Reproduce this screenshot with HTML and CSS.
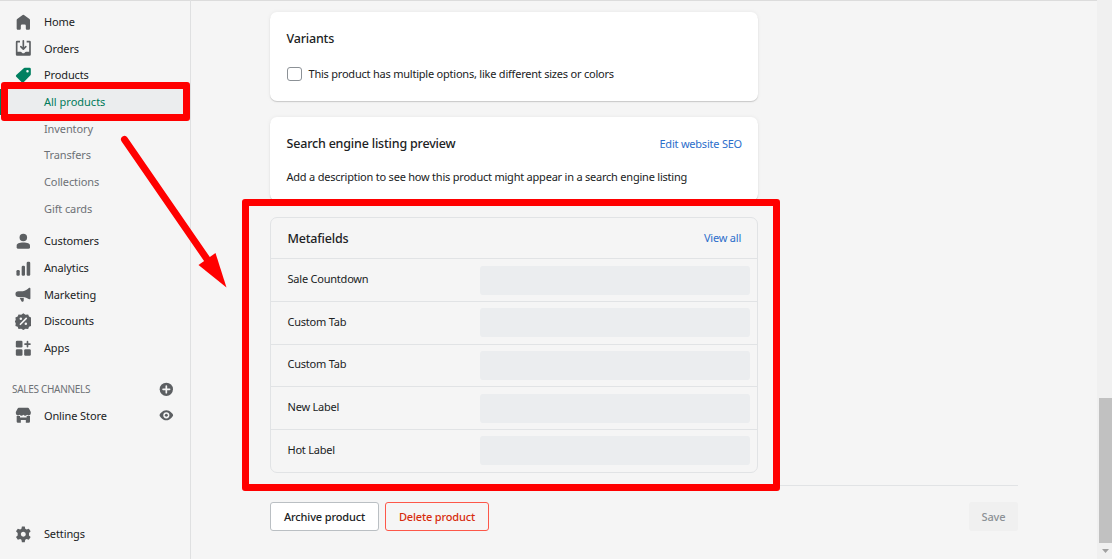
FILE: index.html
```
<!DOCTYPE html>
<html lang="en">
<head>
<meta charset="utf-8">
<title>Product settings</title>
<link rel="stylesheet" href="styles.css">
</head>
<body>
<div class="app">
  <nav class="sidebar">
    <div class="nav-group">
      <a class="nav-item"><svg class="icon" viewBox="0 0 20 20"><path d="M18 7.261V17.500c0 .841-.672 1.500-1.500 1.500h-2c-.828 0-1.500-.659-1.500-1.500V14a1.500 1.500 0 00-1.500-1.500h-3A1.500 1.500 0 007 14v3.477C7 18.318 6.328 19 5.500 19h-2c-.828 0-1.500-.682-1.500-1.523V7.261a1.500 1.500 0 01.615-1.210l6.590-4.820a1.481 1.481 0 011.590 0l6.590 4.820A1.500 1.500 0 0118 7.260z"/></svg><span>Home</span></a>
      <a class="nav-item"><svg class="icon" viewBox="0 0 20 20"><path d="M11 1a1 1 0 10-2 0v7.586L7.707 7.293a1 1 0 00-1.414 1.414l3 3a1 1 0 001.414 0l3-3a1 1 0 00-1.414-1.414L11 8.586V1z"/><path d="M3 14V3h3V1H2.500A1.500 1.500 0 001 2.500v15A1.500 1.500 0 002.500 19h15a1.500 1.500 0 001.500-1.500v-15A1.500 1.500 0 0017.500 1H14v2h3v11h-3.500c-.775 0-1.388.662-1.926 1.244A2 2 0 0110 16a2 2 0 01-1.574-.757C7.888 14.664 7.275 14 6.500 14H3z"/></svg><span>Orders</span></a>
      <a class="nav-item"><svg class="icon green" viewBox="0 0 20 20"><path fill-rule="evenodd" d="M10.500 1.500A1.600 1.600 0 0111.600 1H17.500A1.500 1.500 0 0119 2.500v6.200a1.500 1.500 0 01-.440 1.060l-8.200 8.600a1.600 1.600 0 01-2.260 0L1.500 11.800a1.500 1.500 0 010-2.120zM15 6.500a1.500 1.500 0 100-3 1.500 1.500 0 000 3z"/></svg><span>Products</span></a>
      <a class="nav-item sub selected"><span>All products</span></a>
      <a class="nav-item sub"><span>Inventory</span></a>
      <a class="nav-item sub"><span>Transfers</span></a>
      <a class="nav-item sub"><span>Collections</span></a>
      <a class="nav-item sub"><span>Gift cards</span></a>
    </div>
    <div class="nav-group">
      <a class="nav-item"><svg class="icon" viewBox="0 0 20 20"><circle cx="10" cy="5.500" r="4.500"/><path d="M2 15.200C2 12.600 5 11.500 10 11.500s8 1.100 8 3.700V17a2 2 0 01-2 2H4a2 2 0 01-2-2z"/></svg><span>Customers</span></a>
      <a class="nav-item"><svg class="icon" viewBox="0 0 20 20"><rect x="1.700" y="12" width="4" height="7" rx="1.500"/><rect x="8" y="7" width="4" height="12" rx="1.500"/><rect x="14" y="2" width="4.300" height="17" rx="1.500"/></svg><span>Analytics</span></a>
      <a class="nav-item"><svg class="icon" viewBox="0 0 20 20"><path d="M17 2.200c.7-.4 1.500 0 1.500.8v12c0 .8-.8 1.200-1.500.8-2.300-1.400-4.700-2.400-7.500-2.700H4a3 3 0 010-6.900h5.500c2.800-.3 5.200-2 7.500-4z"/><path d="M5.500 14.200h5v3.300a1.500 1.500 0 01-2.700.9z"/></svg><span>Marketing</span></a>
      <a class="nav-item"><svg class="icon" viewBox="0 0 20 20"><path d="M10 .2l2.500 1.900 3.300-.4 1 2.600 2.700 1.200-.4 3L20.300 10l-1.200 2.500.4 3-2.700 1.100-1 2.700-3.300-.4L10 20.500l-2.500-1.600-3.300.4-1-2.700-2.700-1.100.4-3L-.3 10l1.200-1.500-.4-3 2.700-1.200 1-2.600 3.300.4z"/><path class="cut-line" d="M6.500 13.500l7-7"/><circle class="cut" cx="7" cy="7" r="1.500"/><circle class="cut" cx="13" cy="13" r="1.500"/></svg><span>Discounts</span></a>
      <a class="nav-item"><svg class="icon" viewBox="0 0 20 20"><rect x="1" y="1" width="8" height="8" rx="1.500"/><rect x="1" y="11" width="8" height="8" rx="1.500"/><rect x="11" y="11" width="8" height="8" rx="1.500"/><path d="M14 2a1 1 0 012 0v2h2a1 1 0 010 2h-2v2a1 1 0 01-2 0V6h-2a1 1 0 010-2h2z"/></svg><span>Apps</span></a>
    </div>
    <div class="channel-head"><span>SALES CHANNELS</span><svg class="icon" viewBox="0 0 20 20"><circle cx="10" cy="10" r="8"/><path class="cut-line" d="M10 6v8M6 10h8"/></svg></div>
    <a class="nav-item store"><svg class="icon" viewBox="0 0 20 20"><path d="M4.500 1h11a1.500 1.500 0 011.300.8L19 6v1.500a2.600 2.600 0 01-4.500 1.700 3 3 0 01-4.500 0 3 3 0 01-4.500 0A2.600 2.600 0 011 7.500V6l2.200-4.200A1.500 1.500 0 014.500 1z"/><path d="M2 10.800h4v1.700h8v-1.700h4v6.700a1.500 1.500 0 01-1.500 1.500H13v-3.500H7V19H3.500A1.500 1.500 0 012 17.500z"/></svg><span class="grow">Online Store</span><svg class="icon" viewBox="0 0 20 20"><path fill-rule="evenodd" d="M17.900 9C17.600 8.500 14.700 4 10 4S2.400 8.500 2.100 9c-.3.500-.3 1.300 0 1.800C2.400 11.300 5.300 16 10 16s7.600-4.700 7.900-5.200c.3-.5.300-1.300 0-1.800zM10 13.700a3.700 3.700 0 110-7.400 3.700 3.700 0 010 7.400z"/><circle cx="10" cy="10" r="1.800"/></svg></a>
    <a class="nav-item settings"><svg class="icon" viewBox="0 0 20 20"><path fill-rule="evenodd" d="M8.300.5h3.400l.6 2.700 1.500.9 2.800-.9 2.200 3.200-2 2v2.900l2 2-2.200 3.300-2.800-.9-1.500.9-.6 2.900H8.300l-.6-2.900-1.500-.9-2.800.9-2.200-3.300 2-2V8.400l-2-2 2.200-3.200 2.800.9 1.500-.9zM10 13a3 3 0 100-6 3 3 0 000 6z"/></svg><span>Settings</span></a>
  </nav>
  <main class="main">
    <section class="card variants">
      <h2>Variants</h2>
      <label class="option"><i class="box"></i><span>This product has multiple options, like different sizes or colors</span></label>
    </section>
    <section class="card seo">
      <div class="head"><h2>Search engine listing preview</h2><a class="link">Edit website SEO</a></div>
      <p>Add a description to see how this product might appear in a search engine listing</p>
    </section>
    <section class="meta">
      <div class="head"><h2>Metafields</h2><a class="link">View all</a></div>
      <div class="row"><span>Sale Countdown</span><i class="field"></i></div>
      <div class="row"><span>Custom Tab</span><i class="field"></i></div>
      <div class="row"><span>Custom Tab</span><i class="field"></i></div>
      <div class="row"><span>New Label</span><i class="field"></i></div>
      <div class="row"><span>Hot Label</span><i class="field"></i></div>
    </section>
    <footer class="actions">
      <a class="btn archive">Archive product</a>
      <a class="btn delete">Delete product</a>
      <a class="btn save">Save</a>
    </footer>
  </main>
  <div class="scrollbar"><div class="thumb"></div><svg class="down" viewBox="0 0 7 4"><path d="M0 0h7L3.500 4z"/></svg></div>
</div>
<div class="mark mark-nav"></div>
<div class="mark mark-meta"></div>
<svg class="arrow" viewBox="0 0 120 160"><path class="shaft" d="M14.500 9.500L99 132"/><path d="M116.500 157.500L88.500 135l17-12z"/></svg>
</body>
</html>
```
FILE: styles.css
```
* { box-sizing: border-box; }
body {
  margin: 0;
  position: relative;
  height: 559px;
  overflow: hidden;
  background: #f5f5f5;
  color: #202223;
  font: 11px/16px "Noto Sans", "Open Sans", sans-serif;
}
.app { display: flex; height: 559px; box-shadow: inset 0 1px #dcdcdc; }
h2 { margin: 0; font-size: 12.500px; font-weight: 500; line-height: 20px; letter-spacing: -0.190px; }
p { margin: 0; }

.sidebar {
  display: flex;
  flex-direction: column;
  width: 191px;
  padding: 8.670px 0 11.500px;
  border-right: 1px solid #dfe0e1;
  letter-spacing: -0.110px;
}
.nav-group { display: flex; flex-direction: column; margin-bottom: 6px; }
.nav-item {
  display: flex;
  align-items: center;
  height: 26.670px;
  padding: 0 16px 0 14.700px;
  gap: 12.600px;
}
.nav-item.sub { padding-left: 44px; color: #6d7175; }
.nav-item.sub.selected {
  padding-left: 42px;
  border-left: 2px solid #008060;
  background: #ebedee;
  color: #007a5a;
  letter-spacing: 0;
}
.nav-item.store { padding-right: 15.500px; }
.icon { width: 16.670px; height: 16.670px; flex: none; fill: #5c5f62; }
.icon.green { fill: #008060; }
.cut { fill: #f5f5f5; }
.cut-line { fill: none; stroke: #f5f5f5; stroke-width: 2; stroke-linecap: round; }
.grow { flex: 1; }
.channel-head {
  display: flex;
  align-items: center;
  justify-content: space-between;
  height: 26.670px;
  margin-top: 8.500px;
  padding: 0 15.500px 0 12px;
  font-size: 10px;
  letter-spacing: -0.300px;
  color: #6d7175;
}
.settings { margin-top: auto; }

.main { width: 748px; margin-left: 79px; padding-top: 12px; letter-spacing: -0.220px; }
.card {
  width: 488px;
  padding: 17px 16px 0 16.500px;
  border-radius: 7px;
  background: #fff;
  box-shadow: 0 0 4px rgba(23, 24, 24, .06), 0 1px 1px rgba(0, 0, 0, .16);
}
.variants { height: 89px; }
.option { display: flex; align-items: center; gap: 7px; margin-top: 17px; }
.box { width: 15px; height: 14px; border: 1px solid #8c9196; border-radius: 3px; background: #fff; }
.seo { height: 84px; margin-top: 16px; }
.head { display: flex; align-items: center; justify-content: space-between; }
.link { color: #2c6ecb; }
.seo p { margin-top: 15px; }
.meta {
  width: 488px;
  height: 256px;
  margin-top: 16px;
  border: 1px solid #e1e3e5;
  border-radius: 7px;
}
.meta .head { height: 40.300px; padding: 0 16px 0 16.500px; }
.meta .head h2 { padding-top: 1px; }
.row {
  display: flex;
  align-items: center;
  justify-content: space-between;
  height: 42.670px;
  padding: 0 7px 0 16.500px;
  border-top: 1px solid #e1e3e5;
}
.row span { padding-bottom: 2px; }
.field { width: 270px; height: 29px; border-radius: 3px; background: #ebedef; }

.actions { display: flex; gap: 6px; margin-top: 12px; padding-top: 16px; border-top: 1px solid #e1e3e5; }
.btn {
  display: flex;
  align-items: center;
  justify-content: center;
  height: 29px;
  border-radius: 3px;
  font-weight: 500;
  letter-spacing: -0.150px;
}
.archive { width: 109px; background: #fff; border: 1px solid #babfc3; }
.delete { width: 104px; color: #d72c0d; border: 1px solid #fd5749; }
.save { width: 49px; margin-left: auto; color: #8c9196; background: #f0f0f0; }

.scrollbar {
  display: flex;
  flex-direction: column;
  align-items: flex-end;
  width: 15px;
  margin-left: auto;
  padding-top: 398px;
  background: #f0f0f0;
}
.thumb { width: 13px; height: 145px; background: #c1c1c1; }
.down { width: 7px; height: 4px; margin: 6px 3px 0 0; fill: #a0a0a0; }

.mark { position: absolute; border: 7px solid #f00; border-radius: 3px; }
.mark-nav { left: 1px; top: 82px; width: 189px; height: 39px; }
.mark-meta { left: 242px; top: 199px; width: 538px; height: 292px; }
.arrow { position: absolute; left: 110px; top: 130px; width: 120px; height: 160px; fill: #f00; }
.shaft { stroke: #f00; stroke-width: 7; stroke-linecap: round; }
```
